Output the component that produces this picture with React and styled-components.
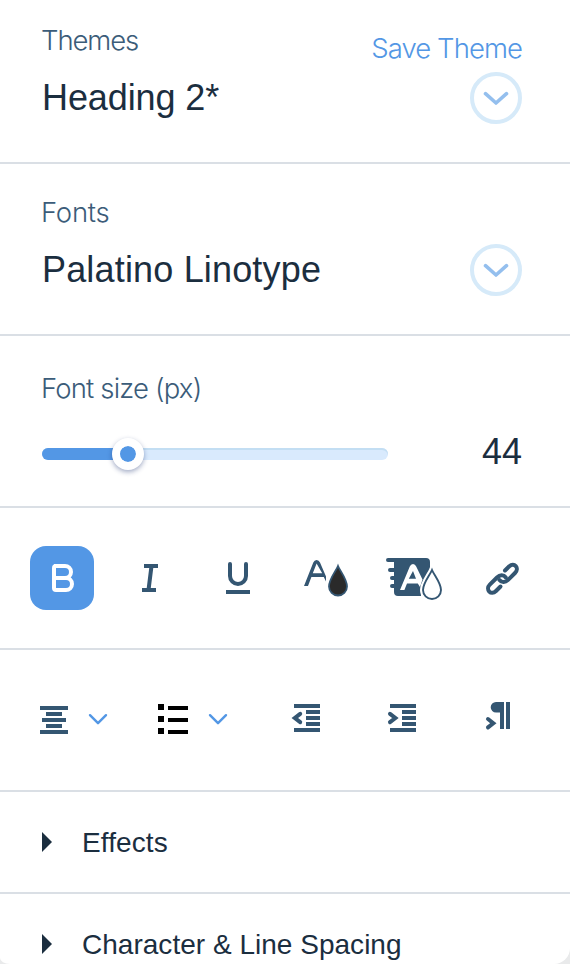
import React from 'react';
import styled, { createGlobalStyle } from 'styled-components';

const GlobalStyle = createGlobalStyle`
  * { box-sizing: border-box; }
  html, body { margin: 0; padding: 0; background: #e9eaeb; overflow: hidden; }
`;

const navy = '#345672';

const Panel = styled.main`
  width: 570px;
  height: 964px;
  overflow: hidden;
  background: #fff;
  border-radius: 0 0 16px 10px / 0 0 16px 6px;
  color: #1b2e3f;
  font-family: 'Liberation Sans', Arial, sans-serif;
  display: flex;
  flex-direction: column;
`;

const Section = styled.section`
  flex: none;
  height: ${p => p.$height}px;
  padding: ${p => p.$top}px 48px 0 42px;
  border-bottom: 2px solid #dadfe5;
`;

const Split = styled.div`
  display: flex;
  justify-content: space-between;
`;

const Stack = styled.div`
  display: flex;
  flex-direction: column;
  align-items: ${p => (p.$end ? 'flex-end' : 'flex-start')};
`;

const Label = styled.div`
  height: 34px;
  line-height: 34px;
  margin-left: -1px;
  font-family: Inter, 'Liberation Sans', sans-serif;
  font-weight: 300;
  font-size: 27.5px;
  letter-spacing: ${p => p.$spacing || 0}px;
  color: #3b5c79;
  white-space: nowrap;
`;

const SaveLink = styled.button`
  height: 34px;
  margin: 8px 0 0;
  padding: 0;
  border: 0;
  background: none;
  line-height: 34px;
  font-family: Inter, 'Liberation Sans', sans-serif;
  font-weight: 300;
  font-size: 27.5px;
  letter-spacing: -0.93px;
  color: #5397e5;
  white-space: nowrap;
`;

const Value = styled.div`
  margin-top: ${p => p.$top || 0}px;
  height: 42px;
  line-height: 42px;
  font-size: 36px;
  letter-spacing: ${p => p.$spacing || 0}px;
  white-space: nowrap;
`;

const DropButton = styled.button`
  width: 52px;
  height: 52px;
  margin-top: ${p => p.$top}px;
  padding: 0;
  border: 4px solid #d6eaf9;
  border-radius: 50%;
  background: #fff;
  display: grid;
  place-items: center;
`;

const SliderRow = styled.div`
  margin-top: 26px;
  display: flex;
  justify-content: space-between;
  align-items: center;
  height: 42px;
`;

const Track = styled.div`
  width: 346px;
  height: 12px;
  margin-top: 3px;
  border-radius: 6px;
  background: #d9eafd;
  box-shadow: inset 0 2px 0 #c3def3;
  display: flex;
  align-items: center;
`;

const Fill = styled.div`
  width: 86px;
  height: 12px;
  border-radius: 6px 0 0 6px;
  background: #5397e5;
`;

const Thumb = styled.div`
  flex: none;
  width: 32px;
  height: 32px;
  margin-left: -16px;
  border: 8px solid #fff;
  border-radius: 50%;
  background: #5397e5;
  background-clip: padding-box;
  box-shadow: 0 2px 5px rgba(22, 45, 110, 0.4);
`;

const Toolbar = styled.div`
  flex: none;
  height: 142px;
  padding: ${p => p.$padding};
  border-bottom: 2px solid #dadfe5;
  display: flex;
  align-items: flex-start;
  gap: ${p => p.$gap}px;
`;

const ToolButton = styled.button`
  width: 64px;
  height: 64px;
  padding: 0;
  border: 0;
  border-radius: 16px;
  background: ${p => (p.$active ? '#5397e5' : 'transparent')};
  color: ${p => (p.$active ? '#fff' : navy)};
  svg { display: block; }
`;

const AlignButton = styled.button`
  height: 36px;
  padding: 0;
  border: 0;
  background: none;
  color: ${p => (p.$dark ? '#000' : navy)};
  display: flex;
  align-items: center;
  gap: 16px;
  margin-right: ${p => p.$after || 0}px;
`;

const Accordion = styled.button`
  flex: none;
  height: 102px;
  padding: 0 0 0 42px;
  border: 0;
  border-bottom: 2px solid #dadfe5;
  background: none;
  color: inherit;
  font-family: inherit;
  font-size: 28px;
  display: flex;
  align-items: center;
  gap: 30px;
  white-space: nowrap;
`;

const AccordionTitle = styled.span`
  padding-top: 2px;
  letter-spacing: ${p => p.$spacing}px;
`;

const Chevron = () => (
  <svg width="26" height="16" viewBox="0 0 26 16" fill="none" stroke="#94bfee" strokeWidth="3.6" strokeLinecap="round" strokeLinejoin="round">
    <path d="M2.5 3.7 13 13 23.5 3.7" />
  </svg>
);

const SmallChevron = () => (
  <svg width="20" height="16" viewBox="0 0 20 16" fill="none" stroke="#5397e5" strokeWidth="2.4" strokeLinecap="round" strokeLinejoin="round">
    <path d="M2 5.2 10 13.2 18 5.2" />
  </svg>
);

const Arrow = () => (
  <svg width="10" height="20" viewBox="0 0 10 20">
    <path d="M0 0 10 10 0 20Z" fill="#1b2e3f" />
  </svg>
);

const ToolIcon = ({ children }) => (
  <svg width="64" height="64" viewBox="0 0 64 64" fill="none" stroke="currentColor" strokeWidth="4">{children}</svg>
);

const BarIcon = ({ children }) => (
  <svg width="36" height="36" viewBox="0 0 36 36" fill="currentColor">{children}</svg>
);

export default function App() {
  return (
    <>
      <GlobalStyle />
      <Panel>
        <Section $height={164} $top={23}>
          <Split>
            <Stack>
              <Label $spacing={-1.1}>Themes</Label>
              <Value $top={20} $spacing={-0.1}>Heading 2*</Value>
            </Stack>
            <Stack $end>
              <SaveLink>Save Theme</SaveLink>
              <DropButton $top={7} aria-label="Choose theme"><Chevron /></DropButton>
            </Stack>
          </Split>
        </Section>
        <Section $height={172} $top={31}>
          <Split>
            <Stack>
              <Label $spacing={-0.25}>Fonts</Label>
              <Value $top={20} $spacing={0.17}>Palatino Linotype</Value>
            </Stack>
            <DropButton $top={49} aria-label="Choose font"><Chevron /></DropButton>
          </Split>
        </Section>
        <Section $height={172} $top={35}>
          <Label $spacing={-0.83}>Font size (px)</Label>
          <SliderRow>
            <Track><Fill /><Thumb /></Track>
            <Value>44</Value>
          </SliderRow>
        </Section>
        <Toolbar $padding="38px 0 0 30px" $gap={24}>
          <ToolButton $active aria-label="Bold">
            <ToolIcon>
              <path d="M24 20H35A6 6 0 0 1 35 32H24H36A6 6 0 0 1 36 44H26Q24 44 24 42V22Q24 20 26 20" strokeLinejoin="round" />
            </ToolIcon>
          </ToolButton>
          <ToolButton aria-label="Italic">
            <ToolIcon><path d="M26 20H40M24 44H38M33.5 20 30.5 44" /></ToolIcon>
          </ToolButton>
          <ToolButton aria-label="Underline">
            <ToolIcon>
              <path d="M24 18V30A8 8 0 0 0 40 30V18" strokeLinecap="round" />
              <path d="M20 46H44" />
            </ToolIcon>
          </ToolButton>
          <ToolButton aria-label="Text color">
            <ToolIcon>
              <path d="M10 40 19.3 16.5Q20.3 14 22.6 14T26 16.5L32 30.5V35.5L29.8 31H17.4L14 40ZM18.8 27.3H28.2L22.6 17.5Z" fill="currentColor" fillRule="evenodd" stroke="none" />
              <path d="M44 20C42 25 35 33 35 40.5A9 9 0 0 0 53 40.5C53 33 46 25 44 20Z" fill="#2a2a2a" strokeWidth="1.8" />
            </ToolIcon>
          </ToolButton>
          <ToolButton aria-label="Highlight color">
            <ToolIcon>
              <path d="M6 12H44Q48 12 48 16V24L39 39V50H16Q12 50 12 46V42H10Q8 42 8 40T10 38H12V34H10Q8 34 8 32T10 30H12V26H8Q6 26 6 24T8 22H12V16H6Q4 16 4 14T6 12Z" fill="currentColor" stroke="none" />
              <path d="M18 44 27.8 20.5Q28.8 18 31 18T34.2 20.5L40.5 33.5 38 41 35.8 37.5H25L22.4 44ZM26.8 32.8H34L31 25Z" fill="#fff" fillRule="evenodd" stroke="none" />
              <path d="M50 24C48 29 41 37 41 44A9 9 0 0 0 59 44C59 37 52 29 50 24Z" fill="#fff" stroke="#fff" strokeWidth="6" />
              <path d="M50 24C48 29 41 37 41 44A9 9 0 0 0 59 44C59 37 52 29 50 24Z" fill="#fff" strokeWidth="1.9" />
            </ToolIcon>
          </ToolButton>
          <ToolButton aria-label="Link">
            <ToolIcon>
              <g strokeLinecap="round" strokeLinejoin="round">
                <path d="M35 24.5 39.3 20.3C44 15.8 50 22 45 27L37.8 34.2C35 37 31.5 36.5 29.5 34" />
                <path d="M30.5 40.5 26 45C21 50 15 43.5 19.8 38.7L27 31.5C30 28.5 33.7 28.7 35.8 31.5" />
              </g>
            </ToolIcon>
          </ToolButton>
        </Toolbar>
        <Toolbar $padding="50px 0 0 36px" $gap={60}>
          <AlignButton $after={-12} aria-label="Alignment">
            <BarIcon><path d="M4 6h28v4H4zM10 12h16v4H10zM6 18h24v4H6zM10 24h16v4H10zM4 30h28v4H4z" /></BarIcon>
            <SmallChevron />
          </AlignButton>
          <AlignButton $dark aria-label="List">
            <BarIcon><path d="M2 4h6v6H2zM2 16h6v6H2zM2 28h6v6H2zM12 6h20v4H12zM12 18h20v4H12zM12 30h20v4H12z" /></BarIcon>
            <SmallChevron />
          </AlignButton>
          <AlignButton aria-label="Decrease indent">
            <BarIcon>
              <path d="M6 4h26v4H6zM18 10h14v4H18zM18 16h14v4H18zM18 22h14v4H18zM6 28h26v4H6z" />
              <path d="M12.2 13.8 6.8 18 12.2 22.2" fill="none" stroke="currentColor" strokeWidth="4" strokeLinecap="round" />
            </BarIcon>
          </AlignButton>
          <AlignButton aria-label="Increase indent">
            <BarIcon>
              <path d="M6 4h26v4H6zM18 10h14v4H18zM18 16h14v4H18zM18 22h14v4H18zM6 28h26v4H6z" />
              <path d="M6 13.8 11.4 18 6 22.2" fill="none" stroke="currentColor" strokeWidth="4" strokeLinecap="round" />
            </BarIcon>
          </AlignButton>
          <AlignButton aria-label="Text direction">
            <BarIcon>
              <path d="M16 2H24V29H20V12.6H16A5.3 5.3 0 0 1 16 2ZM26 2h4v27h-4z" />
              <path d="M8 19 13.3 23.2 8 27.4" fill="none" stroke="currentColor" strokeWidth="4" strokeLinecap="round" />
            </BarIcon>
          </AlignButton>
        </Toolbar>
        <Accordion><Arrow /><AccordionTitle $spacing={0.1}>Effects</AccordionTitle></Accordion>
        <Accordion><Arrow /><AccordionTitle $spacing={0.02}>Character &amp; Line Spacing</AccordionTitle></Accordion>
      </Panel>
    </>
  );
}
